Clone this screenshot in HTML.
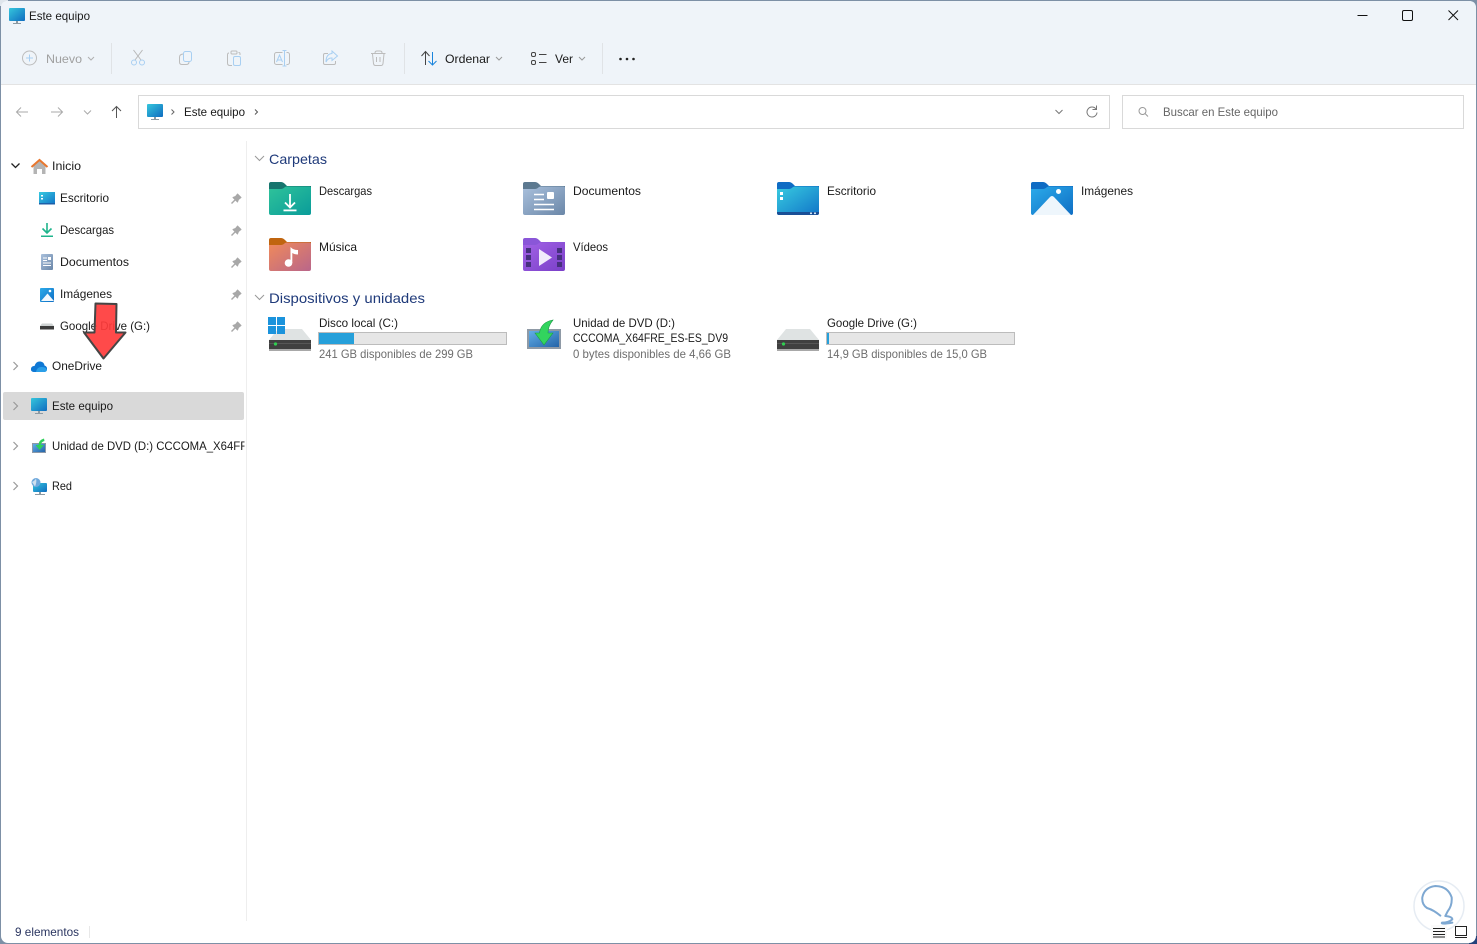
<!DOCTYPE html>
<html lang="es"><head><meta charset="utf-8"><title>Este equipo</title>
<style>
html,body{margin:0;padding:0;background:#fff;width:1477px;height:944px;overflow:hidden}
svg{display:block;position:absolute;left:0;top:0}
text{font-family:"Liberation Sans",sans-serif;font-size:12px;fill:#1a1a1a}
</style></head><body>
<svg width="1477" height="944" viewBox="0 0 1477 944" xmlns="http://www.w3.org/2000/svg">
<defs>
<linearGradient id="mon" x1="0" y1="0" x2="1" y2="1"><stop offset="0" stop-color="#35c6dc"/><stop offset="1" stop-color="#0f6cc0"/></linearGradient>
<linearGradient id="gGreen" x1="0" y1="0" x2="1" y2="1"><stop offset="0" stop-color="#2fc39a"/><stop offset="1" stop-color="#0a9c9a"/></linearGradient>
<linearGradient id="gDoc" x1="0" y1="0" x2="1" y2="1"><stop offset="0" stop-color="#a9c0dc"/><stop offset="1" stop-color="#6b87a8"/></linearGradient>
<linearGradient id="gDesk" x1="0" y1="0" x2="1" y2="1"><stop offset="0" stop-color="#38cbe0"/><stop offset="1" stop-color="#1175c8"/></linearGradient>
<linearGradient id="gImg" x1="0" y1="0" x2="1" y2="1"><stop offset="0" stop-color="#2cabea"/><stop offset="1" stop-color="#0f6ec4"/></linearGradient>
<linearGradient id="gMus" x1="0" y1="0" x2="1" y2="1"><stop offset="0" stop-color="#f08a5a"/><stop offset="1" stop-color="#b9668a"/></linearGradient>
<linearGradient id="gVid" x1="0" y1="0" x2="1" y2="1"><stop offset="0" stop-color="#a263e6"/><stop offset="1" stop-color="#7a3fc8"/></linearGradient>
<linearGradient id="gDvd" x1="0" y1="0" x2="1" y2="1"><stop offset="0" stop-color="#62aee8"/><stop offset="1" stop-color="#2464a8"/></linearGradient>
<g id="pin"><path d="M0.5 10.500 L4 7" stroke="#a8a8a8" stroke-width="1.400" fill="none"/><path d="M2 4.500 L6.500 9 L7.500 6.500 L10 4.500 L6.500 1 L4.500 3.500 Z" fill="#a8a8a8" stroke="#a8a8a8" stroke-linejoin="round"/></g>
<g id="drive"><path d="M9 0 H33 L42 11 V22 H0 V11 Z" fill="#dfe3e3"/><rect x="0" y="11" width="42" height="9" fill="#3f3f3f"/><rect x="0" y="20" width="42" height="2" fill="#a8a8a8"/><rect x="0" y="14" width="42" height="1" fill="#565656"/><circle cx="6.500" cy="15" r="1.600" fill="#30d050"/></g>
<g id="mini"><rect x="0" y="0" width="16" height="13" rx="1" fill="url(#mon)"/><rect x="7" y="13" width="2" height="2" fill="#8d9aa3"/><rect x="4" y="15" width="8" height="1" fill="#8d9aa3"/></g>
<clipPath id="nav"><rect x="0" y="430" width="244.500" height="30"/></clipPath>
</defs>

<!-- chrome -->
<rect x="0" y="0" width="1477" height="944" fill="#7d90a6"/>
<rect x="0" y="0" width="8" height="6" fill="#dfe6ec"/>
<rect x="1469" y="936" width="8" height="8" fill="#23417a"/>
<rect x="1" y="1" width="1475" height="942" rx="7" fill="#fff"/>
<path d="M1 84 V8 Q1 1 8 1 H1469 Q1476 1 1476 8 V84 Z" fill="#eff4f9"/>
<rect x="1" y="84" width="1475" height="1" fill="#e3e3e3"/>

<!-- title -->
<use href="#mini" x="9" y="8"/>
<text x="29" y="20" textLength="61" lengthAdjust="spacingAndGlyphs">Este equipo</text>
<path d="M1357.500 15.500 H1367.500" stroke="#111" stroke-width="1"/>
<rect x="1402.500" y="10.500" width="10" height="10" rx="1.500" fill="none" stroke="#111"/>
<path d="M1448.500 10.500 L1458 20 M1458 10.500 L1448.500 20" stroke="#111" fill="none"/>

<!-- toolbar -->
<circle cx="29.500" cy="58" r="7" fill="none" stroke="#bcbcbc" stroke-width="1"/>
<path d="M29.500 54.500 V61.500 M26 58 H33" stroke="#a8cff2" stroke-width="1"/>
<text x="46" y="63" textLength="36" lengthAdjust="spacingAndGlyphs" style="fill:#a0a0a0">Nuevo</text>
<path d="M88 57 L91 60 L94 57" fill="none" stroke="#b0b0b0"/>
<rect x="111" y="43" width="1" height="31" fill="#e0e3e6"/>
<!-- cut -->
<path d="M133.500 50 L141 60 M142.500 50 L135 60" stroke="#b8b8b8" fill="none"/>
<circle cx="134" cy="62.500" r="2.500" fill="none" stroke="#a8cff2"/><circle cx="142" cy="62.500" r="2.500" fill="none" stroke="#a8cff2"/>
<!-- copy -->
<rect x="183.500" y="51.500" width="8" height="10" rx="2" fill="none" stroke="#a8cff2"/>
<path d="M183 54 Q179.500 54.500 179.500 57 V62 Q179.500 64.500 182 64.500 H186 Q189 64.500 189 62" fill="none" stroke="#bcbcbc"/>
<!-- paste -->
<path d="M229 53 Q227.500 53 227.500 55 V63 Q227.500 65.500 230 65.500 H232 M240 55 V53.500 Q240 52.500 238.500 52.500" fill="none" stroke="#bcbcbc"/>
<rect x="231" y="51" width="6" height="3" rx="1" fill="none" stroke="#bcbcbc"/>
<rect x="233.500" y="56.500" width="7" height="9" rx="1.500" fill="none" stroke="#a8cff2"/>
<!-- rename -->
<rect x="274.500" y="52.500" width="15" height="12" rx="2" fill="none" stroke="#bcbcbc"/>
<rect x="282.500" y="51" width="4" height="15" fill="#eff4f9"/>
<path d="M284.500 50.500 V66 M282.500 50.500 H286.500 M282.500 66 H286.500" stroke="#a8cff2" fill="none"/>
<path d="M276.500 62 L279.500 55 L282.500 62 M277.500 60 H281.500" stroke="#a8cff2" fill="none"/>
<!-- share -->
<path d="M328 53.500 H325 Q323.500 53.500 323.500 55 V63 Q323.500 64.500 325 64.500 H334 Q335.500 64.500 335.500 63 V61" fill="none" stroke="#bcbcbc"/>
<path d="M332 51 L337.500 56 L332 60.500 V58 Q328 57.500 326 62 Q326 54 332 53.500 Z" fill="none" stroke="#a8cff2"/>
<!-- trash -->
<path d="M371 53.500 H385.500 M375 53 Q375 51 377 51 H380 Q382 51 382 53 M372.500 54 L373.500 63.500 Q373.800 65.500 375.500 65.500 H381 Q382.800 65.500 383 63.500 L384 54 M376.500 57 V62 M380 57 V62" fill="none" stroke="#bcbcbc"/>
<rect x="404" y="43" width="1" height="31" fill="#e0e3e6"/>
<!-- sort -->
<path d="M421.500 56 L425.500 51.500 L429.500 56 M425.500 52 V65" fill="none" stroke="#444"/>
<path d="M428.500 61 L432.500 65 L436.500 61 M432.500 64.500 V52" fill="none" stroke="#1a84dc"/>
<text x="445" y="63" textLength="45" lengthAdjust="spacingAndGlyphs">Ordenar</text>
<path d="M496 57 L499 60 L502 57" fill="none" stroke="#999"/>
<!-- view -->
<rect x="531.500" y="52.500" width="4" height="4" rx="1.500" fill="none" stroke="#444"/>
<rect x="531.500" y="60.500" width="4" height="4" rx="1.500" fill="none" stroke="#444"/>
<path d="M539 54.500 H546.500 M539 62.500 H546.500" stroke="#444"/>
<text x="555" y="63" textLength="18" lengthAdjust="spacingAndGlyphs">Ver</text>
<path d="M579 57 L582 60 L585 57" fill="none" stroke="#999"/>
<rect x="602" y="43" width="1" height="31" fill="#e0e3e6"/>
<circle cx="620.500" cy="59" r="1.300" fill="#222"/><circle cx="627" cy="59" r="1.300" fill="#222"/><circle cx="633.500" cy="59" r="1.300" fill="#222"/>

<!-- nav -->
<path d="M28 112 H16.500 M21 107.500 L16.500 112 L21 116.500" fill="none" stroke="#aaa"/>
<path d="M51 112 H62.500 M58 107.500 L62.500 112 L58 116.500" fill="none" stroke="#aaa"/>
<path d="M84 110.500 L87.500 114 L91 110.500" fill="none" stroke="#aaa"/>
<path d="M116.500 118 V106.500 M112 111 L116.500 106.500 L121 111" fill="none" stroke="#555"/>

<!-- address -->
<rect x="138.500" y="95.500" width="971" height="33" fill="#fff" stroke="#d9d9d9"/>
<use href="#mini" x="147" y="104"/>
<path d="M171.500 109.500 L174 112 L171.500 114.500" fill="none" stroke="#666"/>
<text x="184" y="116" textLength="61" lengthAdjust="spacingAndGlyphs">Este equipo</text>
<path d="M255 109.500 L257.500 112 L255 114.500" fill="none" stroke="#555"/>
<path d="M1055.500 110 L1059 113.500 L1062.500 110" fill="none" stroke="#777"/>
<path d="M1096 109 A5 5 0 1 0 1097 112.500 M1096.500 105.500 V109.500 H1092.500" fill="none" stroke="#777"/>
<rect x="1122.500" y="95.500" width="341" height="33" fill="#fff" stroke="#d9d9d9"/>
<circle cx="1142.500" cy="111" r="3.500" fill="none" stroke="#999"/><path d="M1145 113.500 L1148 116.500" stroke="#999"/>
<text x="1163" y="116" textLength="115" lengthAdjust="spacingAndGlyphs" style="fill:#666">Buscar en Este equipo</text>

<!-- sidebar -->
<rect x="246" y="141" width="1" height="780" fill="#eeeeee"/>
<rect x="3" y="392" width="241" height="28" rx="2" fill="#d9d9d9"/>

<path d="M11.500 163.500 L15.500 167.500 L19.500 163.500" fill="none" stroke="#222" stroke-width="1.300"/>
<path d="M33.500 166 V174 H37 V169 H42 V174 H45.500 V166 L39.500 161 Z" fill="#b4b4b4"/>
<path d="M31.500 167 L39.500 160 L47.500 167" fill="none" stroke="#e8772e" stroke-width="2"/>
<text x="52" y="170" textLength="29" lengthAdjust="spacingAndGlyphs">Inicio</text>

<rect x="39" y="192" width="16" height="12" fill="url(#gDesk)"/><rect x="39" y="203" width="16" height="1.500" fill="#1d5fa8"/><rect x="41" y="195" width="2" height="1.500" fill="#fff"/><rect x="41" y="198" width="2" height="1.500" fill="#fff"/>
<text x="60" y="202" textLength="49" lengthAdjust="spacingAndGlyphs">Escritorio</text>

<path d="M47 223 V232.500 M42.500 228.500 L47 233 L51.500 228.500" fill="none" stroke="#1fb48c" stroke-width="1.600"/><rect x="41" y="235.500" width="12" height="1.500" fill="#1fb48c"/>
<text x="60" y="234" textLength="54" lengthAdjust="spacingAndGlyphs">Descargas</text>

<rect x="41" y="254" width="12" height="16" rx="1" fill="url(#gDoc)"/><path d="M43 258 H47 M43 260.500 H47 M43 263 H51 M43 265.500 H51" stroke="#fff"/><rect x="48" y="257" width="3" height="3" fill="#fff"/>
<text x="60" y="266" textLength="69" lengthAdjust="spacingAndGlyphs">Documentos</text>

<rect x="40" y="288" width="14" height="14" rx="1" fill="url(#gImg)"/><path d="M41 301 L47.500 293.500 L54 301 Z" fill="#f2f8fd"/><circle cx="50" cy="291" r="1.300" fill="#fff"/>
<text x="60" y="298" textLength="52" lengthAdjust="spacingAndGlyphs">Imágenes</text>

<path d="M42 323.500 H52 L54 326 V329.500 H40 V326 Z" fill="#cfd3d3"/><rect x="40" y="326" width="14" height="3.500" fill="#3c3c3c"/>
<text x="60" y="330" textLength="90" lengthAdjust="spacingAndGlyphs">Google Drive (G:)</text>

<use href="#pin" x="231" y="193"/><use href="#pin" x="231" y="225"/><use href="#pin" x="231" y="257"/><use href="#pin" x="231" y="289"/><use href="#pin" x="231" y="321"/>

<path d="M13.500 362 L17.500 366 L13.500 370" fill="none" stroke="#999" stroke-width="1.200"/>
<path d="M33.500 372 Q30.500 371.500 31 368.500 Q31.500 366 34.500 366 Q36 361 40.500 361.500 Q44 362 44.500 365.500 Q47.500 366.500 47 369.500 Q46.500 372 44 372 Z" fill="#0f78d4"/>
<path d="M36 372 Q37 367 41 367 Q46 366.500 47 370 Q46.500 372 44 372 Z" fill="#2a9fe8"/>
<text x="52" y="370" textLength="50" lengthAdjust="spacingAndGlyphs">OneDrive</text>

<path d="M13.500 402 L17.500 406 L13.500 410" fill="none" stroke="#999" stroke-width="1.200"/>
<use href="#mini" x="31" y="398"/>
<text x="52" y="410" textLength="61" lengthAdjust="spacingAndGlyphs">Este equipo</text>

<path d="M13.500 442 L17.500 446 L13.500 450" fill="none" stroke="#999" stroke-width="1.200"/>
<rect x="32" y="443" width="14" height="10" fill="#8d99a8"/><rect x="33" y="444" width="12" height="8" fill="url(#gDvd)"/>
<path d="M44 438.500 Q38.500 440 38.500 445 H35.500 L39.500 450 L44 445 H41 Q41 442 44.500 441 Z" fill="#2fd05a"/>
<g clip-path="url(#nav)"><text x="52" y="450" textLength="204" lengthAdjust="spacingAndGlyphs">Unidad de DVD (D:) CCCOMA_X64FRE</text></g>

<path d="M13.500 482 L17.500 486 L13.500 490" fill="none" stroke="#999" stroke-width="1.200"/>
<rect x="33" y="483" width="14" height="9" rx="1" fill="url(#mon)"/><rect x="39" y="492" width="2" height="2" fill="#8d9aa3"/><rect x="35" y="494" width="10" height="1" fill="#8d9aa3"/>
<circle cx="36" cy="482.500" r="4.500" fill="#6ea8dc"/><path d="M32 482 Q35 480.500 36 478.500 Q37 482 35 486.500" fill="#cfe0ef"/>
<text x="52" y="490" textLength="20" lengthAdjust="spacingAndGlyphs">Red</text>

<!-- arrow -->
<path d="M95.500 303.500 L116.500 304 L116 332.500 L125.500 332.500 L103.500 358.500 L84 332.500 L94.500 332.500 Z" fill="#ff3b3b" fill-opacity=".92" stroke="#454545" stroke-width="2" stroke-linejoin="round"/>

<!-- sections -->
<path d="M255 156 L259.500 160.500 L264 156" fill="none" stroke="#999"/>
<text x="269" y="164" textLength="58" lengthAdjust="spacingAndGlyphs" style="font-size:14px;fill:#1f3a7a">Carpetas</text>
<path d="M255 295 L259.500 299.500 L264 295" fill="none" stroke="#999"/>
<text x="269" y="303" textLength="156" lengthAdjust="spacingAndGlyphs" style="font-size:14px;fill:#1f3a7a">Dispositivos y unidades</text>

<!-- folders -->
<g transform="translate(269,182)">
<path d="M2 0 H12 Q14 0 16 2 L18 4 H42 V14 H0 V2 Q0 0 2 0Z" fill="#17756e"/>
<path d="M0 7 H12 Q14 7 16 5 L17.500 4.500 H40.500 Q42 4.500 42 6 V31 Q42 33 40 33 H2 Q0 33 0 31Z" fill="url(#gGreen)"/>
<path d="M21 12 V25 M16 20.500 L21 25.500 L26 20.500" fill="none" stroke="#fff" stroke-width="1.800"/><rect x="14.500" y="27.500" width="13" height="1.800" fill="#fff"/></g>
<g transform="translate(523,182)">
<path d="M2 0 H12 Q14 0 16 2 L18 4 H42 V14 H0 V2 Q0 0 2 0Z" fill="#5c7990"/>
<path d="M0 7 H12 Q14 7 16 5 L17.500 4.500 H40.500 Q42 4.500 42 6 V31 Q42 33 40 33 H2 Q0 33 0 31Z" fill="url(#gDoc)"/>
<path d="M11 12.500 H21 M11 17.500 H21 M11 22.500 H31 M11 27.500 H31" stroke="#fff" stroke-width="1.600"/><rect x="24" y="10" width="7" height="7" rx="1" fill="#fff"/></g>
<g transform="translate(777,182)">
<path d="M2 0 H12 Q14 0 16 2 L18 4 H42 V14 H0 V2 Q0 0 2 0Z" fill="#0f6cc4"/>
<path d="M0 7 H12 Q14 7 16 5 L17.500 4.500 H40.500 Q42 4.500 42 6 V31 Q42 33 40 33 H2 Q0 33 0 31Z" fill="url(#gDesk)"/>
<path d="M0 30 H42 V31 Q42 33 40 33 H2 Q0 33 0 31Z" fill="#1a4f96"/><rect x="3" y="10" width="3" height="3" fill="#fff"/><rect x="3" y="15" width="3" height="3" fill="#fff"/><rect x="33" y="30.500" width="2" height="1.600" fill="#cfe6f5"/><rect x="37" y="30.500" width="2" height="1.600" fill="#cfe6f5"/></g>
<g transform="translate(1031,182)">
<path d="M2 0 H12 Q14 0 16 2 L18 4 H42 V14 H0 V2 Q0 0 2 0Z" fill="#0f6cc4"/>
<path d="M0 7 H12 Q14 7 16 5 L17.500 4.500 H40.500 Q42 4.500 42 6 V31 Q42 33 40 33 H2 Q0 33 0 31Z" fill="url(#gImg)"/>
<path d="M2 33 L19 15 Q21 13 23 15 L40 33 Z" fill="#eef6fc"/><circle cx="27.500" cy="9.500" r="2.500" fill="#fff"/></g>
<g transform="translate(269,238)">
<path d="M2 0 H12 Q14 0 16 2 L18 4 H42 V14 H0 V2 Q0 0 2 0Z" fill="#c0650f"/>
<path d="M0 7 H12 Q14 7 16 5 L17.500 4.500 H40.500 Q42 4.500 42 6 V31 Q42 33 40 33 H2 Q0 33 0 31Z" fill="url(#gMus)"/>
<circle cx="19.500" cy="25" r="3.800" fill="#fff"/><path d="M21.500 25 V9 Q24 12 29 12 V16.500 Q25.500 16.500 23.300 15 V25Z" fill="#fff"/></g>
<g transform="translate(523,238)">
<path d="M2 0 H12 Q14 0 16 2 L18 4 H42 V14 H0 V2 Q0 0 2 0Z" fill="#8a56d8"/>
<path d="M0 7 H12 Q14 7 16 5 L17.500 4.500 H40.500 Q42 4.500 42 6 V31 Q42 33 40 33 H2 Q0 33 0 31Z" fill="url(#gVid)"/>
<path d="M3 10 h5 v5 h-5z M3 17 h5 v5 h-5z M3 24 h5 v5 h-5z M34 10 h5 v5 h-5z M34 17 h5 v5 h-5z M34 24 h5 v5 h-5z" fill="#46307e"/>
<path d="M16 11 L29 19.500 L16 28 Z" fill="#f1eafb"/></g>

<text x="319" y="195" textLength="53" lengthAdjust="spacingAndGlyphs">Descargas</text>
<text x="573" y="195" textLength="68" lengthAdjust="spacingAndGlyphs">Documentos</text>
<text x="827" y="195" textLength="49" lengthAdjust="spacingAndGlyphs">Escritorio</text>
<text x="1081" y="195" textLength="52" lengthAdjust="spacingAndGlyphs">Imágenes</text>
<text x="319" y="251" textLength="38" lengthAdjust="spacingAndGlyphs">Música</text>
<text x="573" y="251" textLength="35" lengthAdjust="spacingAndGlyphs">Vídeos</text>

<!-- drives -->
<use href="#drive" x="269" y="329"/>
<rect x="268" y="317" width="8" height="8" fill="#1b93dc"/><rect x="277" y="317" width="8" height="8" fill="#1b93dc"/><rect x="268" y="326" width="8" height="8" fill="#1b93dc"/><rect x="277" y="326" width="8" height="8" fill="#1b93dc"/>
<text x="319" y="327" textLength="79" lengthAdjust="spacingAndGlyphs">Disco local (C:)</text>
<rect x="318.500" y="332.500" width="188" height="12" fill="#e6e6e6" stroke="#bcbcbc"/>
<rect x="319" y="333" width="35" height="11" fill="#26a0da"/>
<text x="319" y="358" textLength="154" lengthAdjust="spacingAndGlyphs" style="fill:#6d6d6d">241 GB disponibles de 299 GB</text>

<rect x="527" y="329" width="34" height="20" fill="#8f9aa6"/><rect x="529" y="331" width="30" height="16" fill="url(#gDvd)"/>
<path d="M553 320 Q541 322 539.500 333 H535 L544 345 L553 333 H548 Q548 326 553 320Z" fill="#32d45e" stroke="#1d9c48" stroke-width=".6"/>
<text x="573" y="327" textLength="102" lengthAdjust="spacingAndGlyphs">Unidad de DVD (D:)</text>
<text x="573" y="342" textLength="155" lengthAdjust="spacingAndGlyphs">CCCOMA_X64FRE_ES-ES_DV9</text>
<text x="573" y="358" textLength="158" lengthAdjust="spacingAndGlyphs" style="fill:#6d6d6d">0 bytes disponibles de 4,66 GB</text>

<use href="#drive" x="777" y="329"/>
<text x="827" y="327" textLength="90" lengthAdjust="spacingAndGlyphs">Google Drive (G:)</text>
<rect x="826.500" y="332.500" width="188" height="12" fill="#e6e6e6" stroke="#bcbcbc"/>
<rect x="827" y="333" width="2" height="11" fill="#26a0da"/>
<text x="827" y="358" textLength="160" lengthAdjust="spacingAndGlyphs" style="fill:#6d6d6d">14,9 GB disponibles de 15,0 GB</text>

<!-- status -->
<text x="15" y="936" textLength="64" lengthAdjust="spacingAndGlyphs" style="fill:#2a3560">9 elementos</text>
<rect x="89" y="926" width="1" height="12" fill="#e8e8e8"/>

<!-- watermark -->
<circle cx="1439" cy="906" r="25" fill="#fff" stroke="#e6ecf3" stroke-width="1.500"/>
<g transform="translate(1377,874) scale(.3333)"><path d="M190 125 Q170 108 150 102 Q134 92 136 70 Q142 40 175 36 Q212 36 224 70 Q226 95 212 112 L205 126 Q226 128 226 136 Q215 146 195 146 Q190 152 226 146" fill="none" stroke="#7ea8d2" stroke-width="6" stroke-linecap="round" stroke-linejoin="round"/></g>
<rect x="1431" y="925" width="16" height="14" fill="#fafafa"/>
<path d="M1433 928.500 H1445 M1433 931.500 H1445 M1433 934.500 H1445 M1433 937 H1445" stroke="#222"/>
<rect x="1455.500" y="926.500" width="11" height="9" fill="#fff" stroke="#222"/><path d="M1455 937.500 H1467" stroke="#222"/>
</svg>
</body></html>
